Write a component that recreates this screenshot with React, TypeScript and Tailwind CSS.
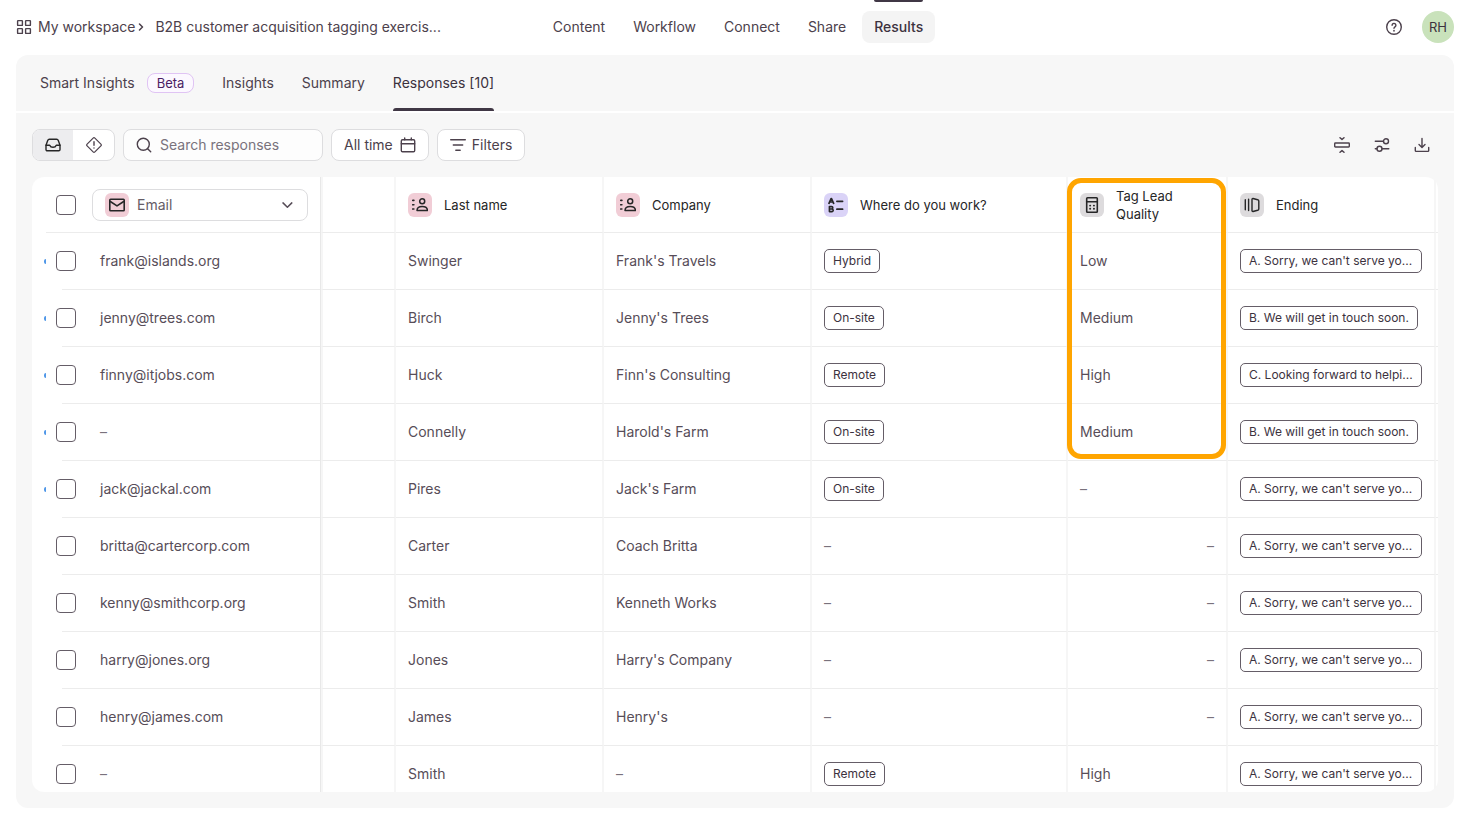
import React, { useState } from 'react';

type Row = {
  email: string;
  lastName: string;
  company: string;
  work?: string;
  quality?: string;
  qualityRight?: boolean;
  ending: 'A' | 'B' | 'C';
  unread?: boolean;
};

const endings = {
  A: "A. Sorry, we can't serve yo...",
  B: 'B. We will get in touch soon.',
  C: 'C. Looking forward to helpi...',
};

const rows: Row[] = [
  { email: 'frank@islands.org', lastName: 'Swinger', company: "Frank's Travels", work: 'Hybrid', quality: 'Low', ending: 'A', unread: true },
  { email: 'jenny@trees.com', lastName: 'Birch', company: "Jenny's Trees", work: 'On-site', quality: 'Medium', ending: 'B', unread: true },
  { email: 'finny@itjobs.com', lastName: 'Huck', company: "Finn's Consulting", work: 'Remote', quality: 'High', ending: 'C', unread: true },
  { email: '–', lastName: 'Connelly', company: "Harold's Farm", work: 'On-site', quality: 'Medium', ending: 'B', unread: true },
  { email: 'jack@jackal.com', lastName: 'Pires', company: "Jack's Farm", work: 'On-site', ending: 'A', unread: true },
  { email: 'britta@cartercorp.com', lastName: 'Carter', company: 'Coach Britta', qualityRight: true, ending: 'A' },
  { email: 'kenny@smithcorp.org', lastName: 'Smith', company: 'Kenneth Works', qualityRight: true, ending: 'A' },
  { email: 'harry@jones.org', lastName: 'Jones', company: "Harry's Company", qualityRight: true, ending: 'A' },
  { email: 'henry@james.com', lastName: 'James', company: "Henry's", qualityRight: true, ending: 'A' },
  { email: '–', lastName: 'Smith', company: '–', work: 'Remote', quality: 'High', ending: 'A' },
];

const navItems = ['Content', 'Workflow', 'Connect', 'Share', 'Results'];

const Icon = ({ children }: { children: React.ReactNode }) => (
  <svg
    className="size-4 shrink-0"
    viewBox="0 0 16 16"
    fill="none"
    stroke="currentColor"
    strokeWidth="1.4"
    strokeLinecap="round"
    strokeLinejoin="round"
    aria-hidden="true"
  >
    {children}
  </svg>
);

const GridIcon = () => (
  <Icon>
    <rect x="1.6" y="1.6" width="4.8" height="4.8" rx="0.5" />
    <rect x="9.6" y="1.6" width="4.8" height="4.8" rx="0.5" />
    <rect x="1.6" y="9.6" width="4.8" height="4.8" rx="0.5" />
    <rect x="9.6" y="9.6" width="4.8" height="4.8" rx="0.5" />
  </Icon>
);

const ContactIcon = () => (
  <Icon>
    <path d="M0.7 3.4h1.2M0.7 7.7h1.2M0.7 12h1.2" strokeWidth="1.6" />
    <circle cx="10.2" cy="4.2" r="2.5" strokeWidth="1.5" />
    <path d="M5 13.5c0-2.4 2-4 5.200-4s5.200 1.600 5.200 4z" strokeWidth="1.5" />
  </Icon>
);

const ChoiceIcon = () => (
  <Icon>
    <path d="M1 6.3L3.1 1.5h.4l2.1 4.8M1.8 5h3" strokeWidth="1.7" />
    <path d="M1.4 9.6h2.2a1.2 1.2 0 0 1 0 2.4H1.4zM1.4 12h2.5a1.3 1.3 0 0 1 0 2.6H1.4z" strokeWidth="1.6" />
    <path d="M8.9 4.3h5.7M8.9 12.2h5.7" strokeWidth="1.7" />
  </Icon>
);

const CalculatorIcon = () => (
  <Icon>
    <rect x="2.7" y="0.8" width="10.6" height="14.4" rx="0.8" strokeWidth="1.6" />
    <path d="M2.7 4.8h10.6" strokeWidth="1.6" />
    <path d="M6.1 8.6h.1M9.9 8.6h.1M6.1 11.8h.1M9.9 11.8h.1" strokeWidth="1.9" />
  </Icon>
);

const EndingIcon = () => (
  <Icon>
    <path d="M1.3 2.8v10M4.6 2.3v11.2" />
    <path d="M8 2.4c0-.6.4-1 1-.9l4.7 1.2c.7.2 1.1.6 1.1 1.3v8c0 .7-.4 1.1-1.1 1.3L9 14.5c-.6.1-1-.3-1-.9z" />
  </Icon>
);

const MailIcon = () => (
  <Icon>
    <rect x="0.8" y="2.2" width="14.4" height="11.6" rx="0.8" strokeWidth="1.6" />
    <path d="M1.3 4.5L8 8.9l6.7-4.4" strokeWidth="1.6" />
  </Icon>
);

const Checkbox = ({ label }: { label: string }) => (
  <input
    type="checkbox"
    aria-label={label}
    className="size-5 shrink-0 appearance-none rounded border border-[#655d67] bg-white checked:bg-[#655d67]"
  />
);

const Chip = ({ text, full }: { text: string; full?: boolean }) => (
  <span
    className={`${full ? 'flex' : 'inline-flex'} h-6 items-center rounded-[5px] border border-[#655d67] px-2 align-middle text-xs whitespace-nowrap text-[#3c323e]`}
  >
    {text}
  </span>
);

const Dash = () => <span className="text-[#79727c]">–</span>;

const ColumnHead = ({ icon, tone, label }: { icon: React.ReactNode; tone: string; label: string }) => (
  <div className="flex items-center gap-3">
    <span className={`flex size-6 shrink-0 items-center justify-center rounded-md text-[#262627] ${tone}`}>{icon}</span>
    <span className="text-[13px] leading-[18px] font-normal text-[#262627]">{label}</span>
  </div>
);

const thClass = 'h-14 border-r-2 border-b border-r-[#f6f6f6] border-b-[#ececec] px-3 text-left';
const tdClass = 'h-[57px] border-r-2 border-b border-r-[#f6f6f6] border-b-[#ececec] px-3';

const App = () => {
  const [search, setSearch] = useState('');

  return (
    <div className="flex h-screen flex-col bg-white px-4 pb-[22px] font-['Inter',sans-serif] text-sm text-[#4c414c]">
      <header className="grid h-[55px] shrink-0 grid-cols-[1fr_auto_1fr] items-start">
        <div className="flex h-[54px] items-center">
          <a href="#" className="flex items-center gap-1.5">
            <GridIcon />
            My workspace
          </a>
          <svg className="mx-0.5 size-2 shrink-0" viewBox="0 0 8 8" fill="none" stroke="currentColor" strokeWidth="1.5" strokeLinecap="round" strokeLinejoin="round" aria-hidden="true">
            <path d="M2.500 1l3 3-3 3" />
          </svg>
          <a href="#" className="ml-2">B2B customer acquisition tagging exercis...</a>
        </div>
        <nav className="flex gap-1 pl-1.5">
          {navItems.map((item) => (
            <div key={item} className="flex flex-col">
              <div className={`mx-3 mb-[9px] h-0.5 rounded-b ${item === 'Results' ? 'bg-[#403745]' : ''}`} />
              <a
                href="#"
                className={`flex h-8 items-center rounded-lg px-3 ${item === 'Results' ? 'bg-[#f4f4f4] font-medium text-[#3c323e]' : ''}`}
              >
                {item}
              </a>
            </div>
          ))}
        </nav>
        <div className="flex h-[54px] items-center justify-end gap-5">
          <button type="button" aria-label="Help">
            <Icon>
              <circle cx="8" cy="8" r="7.3" />
              <path d="M6.1 6.3a1.9 1.9 0 1 1 2.9 1.6c-.6.4-1 .7-1 1.3" />
              <path d="M8 11.7v.1" strokeWidth="1.7" />
            </Icon>
          </button>
          <button type="button" className="size-8 rounded-full bg-[#c9e2bb] text-[13px] text-[#3c323e]">RH</button>
        </div>
      </header>

      <nav className="mb-0.5 flex h-14 shrink-0 gap-7 rounded-t-xl bg-[#f7f7f7] px-6">
        <a href="#" className="flex items-center gap-3">
          Smart Insights
          <span className="flex h-5 items-center rounded-lg border border-[#e0c4f4] bg-[#fcf8ff] px-[9px] text-[13px] text-[#4b1d63]">Beta</span>
        </a>
        <a href="#" className="flex items-center">Insights</a>
        <a href="#" className="flex items-center">Summary</a>
        <a href="#" className="flex flex-col text-[#3c323e]">
          <span className="flex flex-1 items-center pt-[3px]">Responses [10]</span>
          <span className="h-[3px] rounded-t bg-[#403745]" />
        </a>
      </nav>

      <main className="flex min-h-0 flex-1 flex-col gap-4 rounded-b-xl bg-[#f7f7f7] p-4">
        <div className="flex h-8 shrink-0 items-center gap-2">
          <div className="flex h-8 overflow-hidden rounded-lg border border-[#dddddf] bg-white">
            <button type="button" aria-label="Inbox" className="flex w-10 items-center justify-center bg-[#ededef] text-[#262627]">
              <Icon>
                <path d="M1 8.2L2.7 3.4c.3-.8.9-1.200 1.700-1.200h7.200c.8 0 1.400.4 1.700 1.200L15 8.200v4.300c0 .8-.5 1.300-1.300 1.300H2.300c-.8 0-1.300-.5-1.300-1.300z" />
                <path d="M1 8.2h3.700c.5 1.300 1.700 2.100 3.300 2.100s2.800-.8 3.300-2.100H15" />
              </Icon>
            </button>
            <button type="button" aria-label="Spam" className="flex w-[41px] items-center justify-center">
              <Icon>
                <path d="M7.1 1.1a1.3 1.3 0 0 1 1.8 0l6 6a1.3 1.3 0 0 1 0 1.8l-6 6a1.3 1.3 0 0 1-1.8 0l-6-6a1.3 1.3 0 0 1 0-1.8z" strokeWidth="1.2" />
                <path d="M8 4.7v3.6M8 11v.1" />
              </Icon>
            </button>
          </div>
          <label className="flex h-8 w-[200px] items-center gap-2 rounded-lg border border-[#dddddf] bg-[#fdfdfd] px-3">
            <Icon>
              <circle cx="7.3" cy="7.3" r="6" />
              <path d="M11.7 11.7l3 3" />
            </Icon>
            <input
              type="text"
              aria-label="Search responses"
              placeholder="Search responses"
              value={search}
              onChange={(e) => setSearch(e.target.value)}
              className="w-full min-w-0 bg-transparent outline-none placeholder:text-[#79727c]"
            />
          </label>
          <button type="button" className="flex h-8 items-center gap-[7px] rounded-lg border border-[#dddddf] bg-white px-3">
            All time
            <Icon>
              <rect x="1.3" y="2.7" width="13.4" height="12" rx="1.2" />
              <path d="M1.3 6.8h13.4M4.7 1v1.700M11.300 1v1.700" />
            </Icon>
          </button>
          <button type="button" className="flex h-8 items-center gap-1.5 rounded-lg border border-[#dddddf] bg-white px-3">
            <Icon>
              <path d="M0.7 2.7h14.6M3.3 8h9.4M5.8 13.3h4.4" />
            </Icon>
            Filters
          </button>
          <div className="ml-auto flex gap-2">
            <button type="button" aria-label="Row height" className="flex size-8 items-center justify-center">
              <Icon>
                <rect x="0.7" y="6" width="14.6" height="4" rx="0.7" />
                <path d="M6 0.7l2 1.7 2-1.7M6 15.3l2-1.7 2 1.7" />
              </Icon>
            </button>
            <button type="button" aria-label="Columns" className="flex size-8 items-center justify-center">
              <Icon>
                <circle cx="12" cy="4.2" r="2.5" />
                <circle cx="5.5" cy="11.8" r="2.5" />
                <path d="M1.3 4.2h8.2M8 11.8h6.8M1.3 11.8H3" />
              </Icon>
            </button>
            <button type="button" aria-label="Download" className="flex size-8 items-center justify-center">
              <Icon>
                <path d="M8 1.5v8.8M5 7.6l3 2.9 3-2.9M1.3 10.5v3.1c0 .5.3.8.8.8h11.800c.5 0 .8-.3.8-.8v-3.100" />
              </Icon>
            </button>
          </div>
        </div>

        <div className="min-h-0 flex-1 overflow-auto rounded-xl bg-white [scrollbar-width:none]">
          <table className="w-full min-w-[1404px] table-fixed border-separate border-spacing-0 text-[#574d58]">
            <colgroup>
              <col className="w-[289px]" />
              <col className="w-[75px]" />
              <col className="w-[208px]" />
              <col className="w-[208px]" />
              <col className="w-[256px]" />
              <col className="w-40" />
              <col className="w-[208px]" />
              <col />
            </colgroup>
            <thead>
              <tr>
                <th className="border-r border-r-[#e8e8e8] p-0">
                  <div className="flex h-[55px] items-center gap-4 pr-3 pl-6">
                    <Checkbox label="Select all responses" />
                    <div className="relative flex-1">
                      <select
                        aria-label="Pinned column"
                        className="h-8 w-full appearance-none rounded-lg border border-[#dddddf] bg-white pl-11 text-sm font-normal text-[#655d67]"
                      >
                        <option>Email</option>
                        <option>Last name</option>
                      </select>
                      <span className="pointer-events-none absolute inset-y-1 left-[13px] flex w-6 items-center justify-center rounded-md bg-[#f1cdd6] text-[#262627]">
                        <MailIcon />
                      </span>
                      <span className="pointer-events-none absolute inset-y-0 right-3 flex items-center">
                        <Icon>
                          <path d="M3 5.900l4.400 4.300 4.400-4.300" strokeWidth="1.500" />
                        </Icon>
                      </span>
                    </div>
                  </div>
                  <div className="ml-3.5 border-b border-[#ececec]" />
                </th>
                <th className="border-x-2 border-b border-x-[#f6f6f6] border-b-[#ececec]" />
                <th className={thClass}>
                  <ColumnHead icon={<ContactIcon />} tone="bg-[#f1cdd6]" label="Last name" />
                </th>
                <th className={thClass}>
                  <ColumnHead icon={<ContactIcon />} tone="bg-[#f1cdd6]" label="Company" />
                </th>
                <th className={thClass}>
                  <ColumnHead icon={<ChoiceIcon />} tone="bg-[#dad3f7]" label="Where do you work?" />
                </th>
                <th className={`${thClass} relative`}>
                  <ColumnHead icon={<CalculatorIcon />} tone="bg-[#dddbdd]" label="Tag Lead Quality" />
                  {/* outline round the tagged values */}
                  <div className="pointer-events-none absolute top-px -left-px z-10 h-[281px] w-[159px] rounded-[14px] border-5 border-[#ffa500]" />
                </th>
                <th className={thClass}>
                  <ColumnHead icon={<EndingIcon />} tone="bg-[#dddbdd]" label="Ending" />
                </th>
                <th className="border-b border-[#ececec]" />
              </tr>
            </thead>
            <tbody>
              {rows.map((row, i) => (
                <tr key={i}>
                  <td className="border-r border-r-[#e8e8e8] p-0">
                    <div className="flex h-14 items-center pl-3">
                      <span className={`mr-2.5 h-[5px] w-0.5 rounded-l-full ${row.unread ? 'bg-[#4f97e8]' : ''}`} />
                      <Checkbox label={`Select response ${i + 1}`} />
                      <span className="ml-6">{row.email === '–' ? <Dash /> : row.email}</span>
                    </div>
                    <div className="ml-[30px] border-b border-[#ececec]" />
                  </td>
                  <td className="border-x-2 border-b border-x-[#f6f6f6] border-b-[#ececec]" />
                  <td className={tdClass}>{row.lastName}</td>
                  <td className={tdClass}>{row.company === '–' ? <Dash /> : row.company}</td>
                  <td className={tdClass}>{row.work ? <Chip text={row.work} /> : <Dash />}</td>
                  <td className={`${tdClass} ${row.qualityRight ? 'text-right' : ''}`}>{row.quality || <Dash />}</td>
                  <td className={tdClass}>
                    <Chip text={endings[row.ending]} full={row.ending !== 'B'} />
                  </td>
                  <td className="border-b border-[#ececec]" />
                </tr>
              ))}
            </tbody>
          </table>
        </div>
      </main>
    </div>
  );
};

export default App;
